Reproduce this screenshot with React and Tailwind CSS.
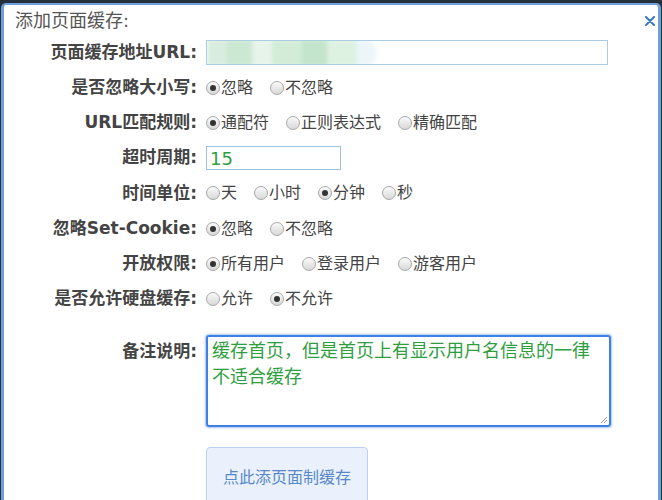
import React from 'react';

const font = '"DejaVu Sans", "Noto Sans CJK SC", sans-serif';

function Radio({ label, checked }) {
  return (
    <label className="inline-flex items-center mr-[17px] text-[16px] text-[#444]">
      <span className="w-[14px] h-[14px] rounded-full border border-[#a8a8a8] bg-gradient-to-b from-[#fafafa] to-[#d8d8d8] flex items-center justify-center mr-[1px]">
        {checked && <span className="w-[6px] h-[6px] rounded-full bg-[#333]" />}
      </span>
      {label}
    </label>
  );
}

function Row({ label, children }) {
  return (
    <div className="flex items-center h-[35.2px]">
      <div className="w-[193px] text-right font-bold text-[17px] text-[#444] shrink-0">{label}:</div>
      <div className="ml-[9px] flex items-center">{children}</div>
    </div>
  );
}

export default function App() {
  const rows = [
    ['是否忽略大小写', [['忽略', true], ['不忽略', false]]],
    ['URL匹配规则', [['通配符', true], ['正则表达式', false], ['精确匹配', false]]],
  ];
  const rows2 = [
    ['时间单位', [['天', false], ['小时', false], ['分钟', true], ['秒', false]]],
    ['忽略Set-Cookie', [['忽略', true], ['不忽略', false]]],
    ['开放权限', [['所有用户', true], ['登录用户', false], ['游客用户', false]]],
    ['是否允许硬盘缓存', [['允许', false], ['不允许', true]]],
  ];

  return (
    <div className="w-[662px] h-[500px] bg-[#25303d] overflow-hidden pt-[3px]" style={{ fontFamily: font }}>
      <div className="h-[510px] ml-[1px] mr-[1px] bg-white rounded-t-[5px] border-l-[3px] border-t-[2px] border-r-[3px] border-[#6f9fdd] relative">
        <div className="h-[30px] flex items-center pl-[11px] text-[18px] text-[#555]">添加页面缓存:</div>
        <svg className="absolute right-[3px] top-[11px]" width="10" height="10" viewBox="0 0 10 10">
          <path d="M1 1 L9 9 M9 1 L1 9" stroke="#3a78c2" strokeWidth="2" strokeLinecap="round" />
        </svg>

        <Row label="页面缓存地址URL">
          <div className="relative w-[402px] h-[25px] border border-[#a9cde6] bg-white overflow-hidden">
            <div className="absolute left-0 top-[-2px] w-[170px] h-[28px] flex blur-[2px] opacity-80">
              <div className="w-[20px] bg-[#cfe9d6]" />
              <div className="w-[25px] bg-[#bfe3c8]" />
              <div className="w-[20px] bg-[#e1f2e5]" />
              <div className="w-[30px] bg-[#c8e8cf]" />
              <div className="w-[25px] bg-[#b5dfbf]" />
              <div className="w-[30px] bg-[#d6efdc]" />
              <div className="w-[20px] bg-[#e8f4f8] rounded-r-full" />
            </div>
          </div>
        </Row>
        {rows.map(([l, opts]) => (
          <Row key={l} label={l}>
            {opts.map(([o, c]) => <Radio key={o} label={o} checked={c} />)}
          </Row>
        ))}
        <Row label="超时周期">
          <div className="w-[135px] h-[24px] border border-[#9dc3e0] flex items-center pl-[3px] text-[18px] text-[#2e9e3e]">15</div>
        </Row>
        {rows2.map(([l, opts]) => (
          <Row key={l} label={l}>
            {opts.map(([o, c]) => <Radio key={o} label={o} checked={c} />)}
          </Row>
        ))}

        <div className="flex mt-[18px]">
          <div className="w-[193px] text-right font-bold text-[17px] text-[#444] shrink-0 pt-[4px]">备注说明:</div>
          <div className="ml-[9px] w-[405px] h-[92px] border-2 border-[#3f80e6] rounded-[3px] shadow-[0_0_2px_1px_#a8c6f2] px-[4px] pt-[1px] text-[18px] leading-[26px] text-[#2e9e3e] relative">
            缓存首页，但是首页上有显示用户名信息的一律不适合缓存
            <svg className="absolute right-[1px] bottom-[1px]" width="8" height="8" viewBox="0 0 8 8">
              <path d="M7 1 L1 7 M7 4 L4 7" stroke="#999" strokeWidth="1" />
            </svg>
          </div>
        </div>

        <div className="flex mt-[20px]">
          <div className="w-[193px] shrink-0" />
          <button className="ml-[9px] w-[162px] h-[62px] border border-[#b9d2f2] rounded-[4px] bg-[#eaf1fd] text-[16px] text-[#5688c8]">点此添页面制缓存</button>
        </div>
      </div>
    </div>
  );
}
